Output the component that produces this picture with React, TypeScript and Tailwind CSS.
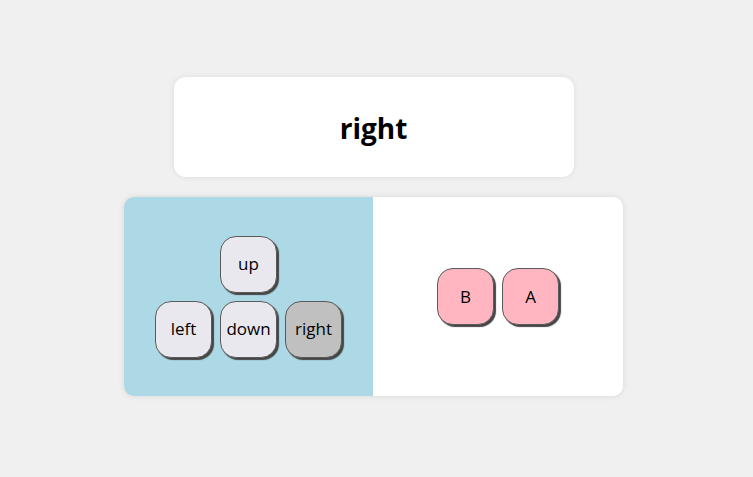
export default function App() {
  const key =
    "w-[57px] h-[57px] rounded-[16px] border border-[#5a5a5a] shadow-[2px_2px_1px_#444] flex items-center justify-center text-[17px] text-black";

  return (
    <div
      className="min-h-screen bg-[#f0f0f0] flex flex-col items-center pt-[77px] pr-[6px] gap-5"
      style={{ fontFamily: '"Open Sans", "Noto Sans", sans-serif' }}
    >
      <div className="w-[400px] h-[100px] bg-white rounded-xl shadow-[0_0_6px_rgba(0,0,0,0.08)] flex items-center justify-center">
        <h1 className="text-[28px] font-bold text-black pt-0.5">right</h1>
      </div>

      <div className="w-[499px] h-[199px] rounded-[10px] overflow-hidden shadow-[0_0_6px_rgba(0,0,0,0.1)] flex">
        <div className="w-[249px] bg-[#add8e6] flex flex-col items-center justify-center gap-2">
          <div className={`${key} bg-[#e9e8ee]`}>up</div>
          <div className="flex gap-2">
            <div className={`${key} bg-[#e9e8ee]`}>left</div>
            <div className={`${key} bg-[#e9e8ee]`}>down</div>
            <div className={`${key} bg-[#c0c0c0]`}>right</div>
          </div>
        </div>
        <div className="flex-1 bg-white flex items-center justify-center gap-2">
          <div className={`${key} bg-[#ffb6c1]`}>B</div>
          <div className={`${key} bg-[#ffb6c1]`}>A</div>
        </div>
      </div>
    </div>
  );
}
